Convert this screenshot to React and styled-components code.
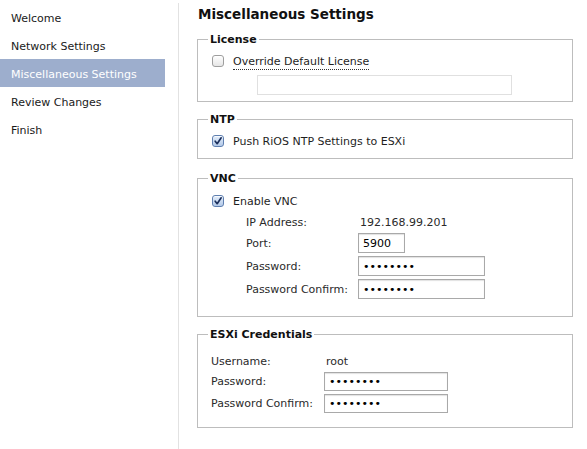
import React from "react";
import styled, { createGlobalStyle } from "styled-components";

const GlobalStyle = createGlobalStyle`
	html, body {
		margin: 0;
		padding: 0;
		background: #ffffff;
	}
	body {
		font-family: "DejaVu Sans", Verdana, sans-serif;
		font-size: 11px;
		color: #1e1e1e;
	}
`;

const steps = ["Welcome", "Network Settings", "Miscellaneous Settings", "Review Changes", "Finish"];

export default function App() {
	return (
		<Page>
			<GlobalStyle />
			<Sidebar>
				<StepList>
					{steps.map((s) => (
						<Step key={s} active={s === "Miscellaneous Settings"}>
							{s}
						</Step>
					))}
				</StepList>
			</Sidebar>
			<Main>
				<Title>Miscellaneous Settings</Title>

				<Group>
					<Legend>License</Legend>
					<CheckRow top={5}>
						<CheckBox />
						<DottedLabel>Override Default License</DottedLabel>
					</CheckRow>
					<WideInput disabled />
				</Group>

				<Group spacing={13}>
					<Legend>NTP</Legend>
					<CheckRow top={5} bottom={1}>
						<CheckBox checked />
						<span>Push RiOS NTP Settings to ESXi</span>
					</CheckRow>
				</Group>

				<Group>
					<Legend>VNC</Legend>
					<CheckRow top={6}>
						<CheckBox checked />
						<span>Enable VNC</span>
					</CheckRow>
					<FieldGrid indent={48} labelWidth={112} gap={3} top={4} bottom={11}>
						<Label short>IP Address:</Label>
						<Value short>192.168.99.201</Value>
						<Label>Port:</Label>
						<Input width={47} defaultValue="5900" />
						<Label>Password:</Label>
						<Input width={127} type="password" defaultValue="password" />
						<Label>Password Confirm:</Label>
						<Input width={127} type="password" defaultValue="password" />
					</FieldGrid>
				</Group>

				<Group>
					<Legend>ESXi Credentials</Legend>
					<FieldGrid indent={13} labelWidth={113} gap={3} top={13} bottom={8}>
						<Label short>Username:</Label>
						<Value short>root</Value>
						<Label>Password:</Label>
						<Input width={124} height={19} type="password" defaultValue="password" />
						<Label>Password Confirm:</Label>
						<Input width={124} height={19} type="password" defaultValue="password" />
					</FieldGrid>
				</Group>
			</Main>
		</Page>
	);
}

function CheckBox({ checked }) {
	return (
		<Box checked={checked}>
			{checked && (
				<svg width="12" height="12" viewBox="0 0 12 12">
					<path
						d="M2.6 6.2 L5 9.2 L9.8 2.2"
						fill="none"
						stroke="#1b2f5c"
						strokeWidth="2"
						strokeLinecap="round"
						strokeLinejoin="round"
					/>
				</svg>
			)}
		</Box>
	);
}

const Page = styled.div`
	display: flex;
	min-height: 449px;
	padding-top: 3px;
	box-sizing: border-box;
`;

const Sidebar = styled.nav`
	width: 178px;
	flex-shrink: 0;
	border-right: 1px solid #e2e2e2;
`;

const StepList = styled.ul`
	list-style: none;
	margin: 0;
	padding: 0;
	width: 165px;
`;

const Step = styled.li`
	box-sizing: border-box;
	height: 28px;
	padding: 3px 0 0 11px;
	line-height: 25px;
	color: ${(p) => (p.active ? "#ffffff" : "#1a1a1a")};
	background: ${(p) => (p.active ? "#9daecd" : "transparent")};
`;

const Main = styled.main`
	flex: 1;
	padding: 2px 14px 0 18px;
`;

const Title = styled.h1`
	margin: 0 0 10px 1px;
	font-size: 13.5px;
	line-height: 18px;
	font-weight: bold;
	color: #111111;
`;

const Group = styled.fieldset`
	margin: 0 0 ${(p) => p.spacing || 11}px 0;
	padding: 0 0 6px 0;
	border: 1px solid #bdbdbd;
	min-width: 0;
`;

const Legend = styled.legend`
	margin-left: 10px;
	padding: 0 2px;
	font-weight: bold;
	font-size: 11px;
	line-height: 13px;
	color: #111111;
`;

const CheckRow = styled.label`
	display: flex;
	align-items: center;
	gap: 9px;
	height: 20px;
	margin: ${(p) => p.top || 0}px 0 ${(p) => p.bottom || 0}px 14px;
`;

const Box = styled.span`
	width: 12px;
	height: 12px;
	box-sizing: border-box;
	border-radius: 3px;
	display: inline-flex;
	align-items: center;
	justify-content: center;
	border: 1px solid ${(p) => (p.checked ? "#5f7fb0" : "#9e9e9e")};
	background: ${(p) =>
		p.checked
			? "linear-gradient(#e4eefa, #b3c9e8)"
			: "linear-gradient(#ffffff, #e6e6e6)"};
	box-shadow: inset 0 1px 0 rgba(255, 255, 255, 0.7);
`;

const DottedLabel = styled.span`
	border-bottom: 1px dotted #333;
	line-height: 14px;
	padding-top: 2px;
`;

const WideInput = styled.input`
	display: block;
	box-sizing: border-box;
	width: 255px;
	height: 20px;
	margin: 4px 0 0 59px;
	border: 1px solid #e0e0e0;
	background: #ffffff;
	outline: none;
`;

const FieldGrid = styled.div`
	display: grid;
	grid-template-columns: ${(p) => p.labelWidth}px auto;
	justify-content: start;
	align-items: center;
	row-gap: ${(p) => p.gap}px;
	margin: ${(p) => p.top || 0}px 0 ${(p) => p.bottom || 0}px ${(p) => p.indent}px;
`;

const Label = styled.span`
	line-height: ${(p) => (p.short ? 15 : 19)}px;
	color: #2a2a2a;
`;

const Value = styled.span`
	line-height: ${(p) => (p.short ? 15 : 19)}px;
	padding-left: 2px;
	color: #2a2a2a;
`;

const Input = styled.input`
	box-sizing: border-box;
	width: ${(p) => p.width}px;
	height: ${(p) => p.height || 20}px;
	padding: 0 4px;
	border: 1px solid #a9a9a9;
	box-shadow: inset 0 1px 1px rgba(0, 0, 0, 0.12);
	font-family: "DejaVu Sans", Verdana, sans-serif;
	font-size: 11px;
	color: #000;
	outline: none;
`;
